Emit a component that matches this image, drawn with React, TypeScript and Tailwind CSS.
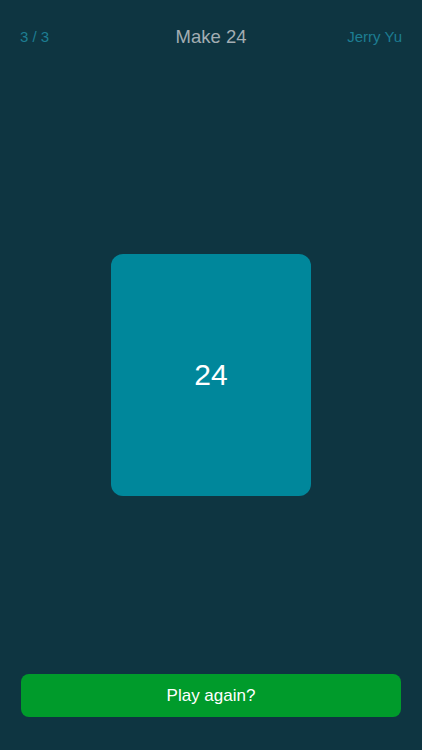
export default function App() {
  return (
    <div
      className="flex h-[750px] w-full flex-col bg-[#0e3541] text-white"
      style={{ fontFamily: '"Liberation Sans", Arial, sans-serif' }}
    >
      {/* Top bar: progress, title, author */}
      <div className="flex h-[60px] items-start justify-between px-5 pt-[26px]">
        <span className="w-[80px] text-[15px] leading-[22px] text-[#1d7d92]">3 / 3</span>
        <span className="text-[18.5px] leading-[22px] text-[#a3adb2]">Make 24</span>
        <span className="w-[80px] text-right text-[15px] leading-[22px] text-[#1d7d92]">Jerry Yu</span>
      </div>

      {/* Card */}
      <div className="flex flex-1 items-center justify-center pt-4">
        <div className="flex h-[242px] w-[200px] items-center justify-center rounded-[12px] bg-[#00879b]">
          <span className="text-[30px] leading-none text-white">24</span>
        </div>
      </div>

      {/* Action */}
      <div className="px-[21px] pb-[33px]">
        <button className="flex h-[43px] w-full items-center justify-center rounded-[8px] bg-[#009b2b] text-[17px] text-white">
          Play again?
        </button>
      </div>
    </div>
  );
}
